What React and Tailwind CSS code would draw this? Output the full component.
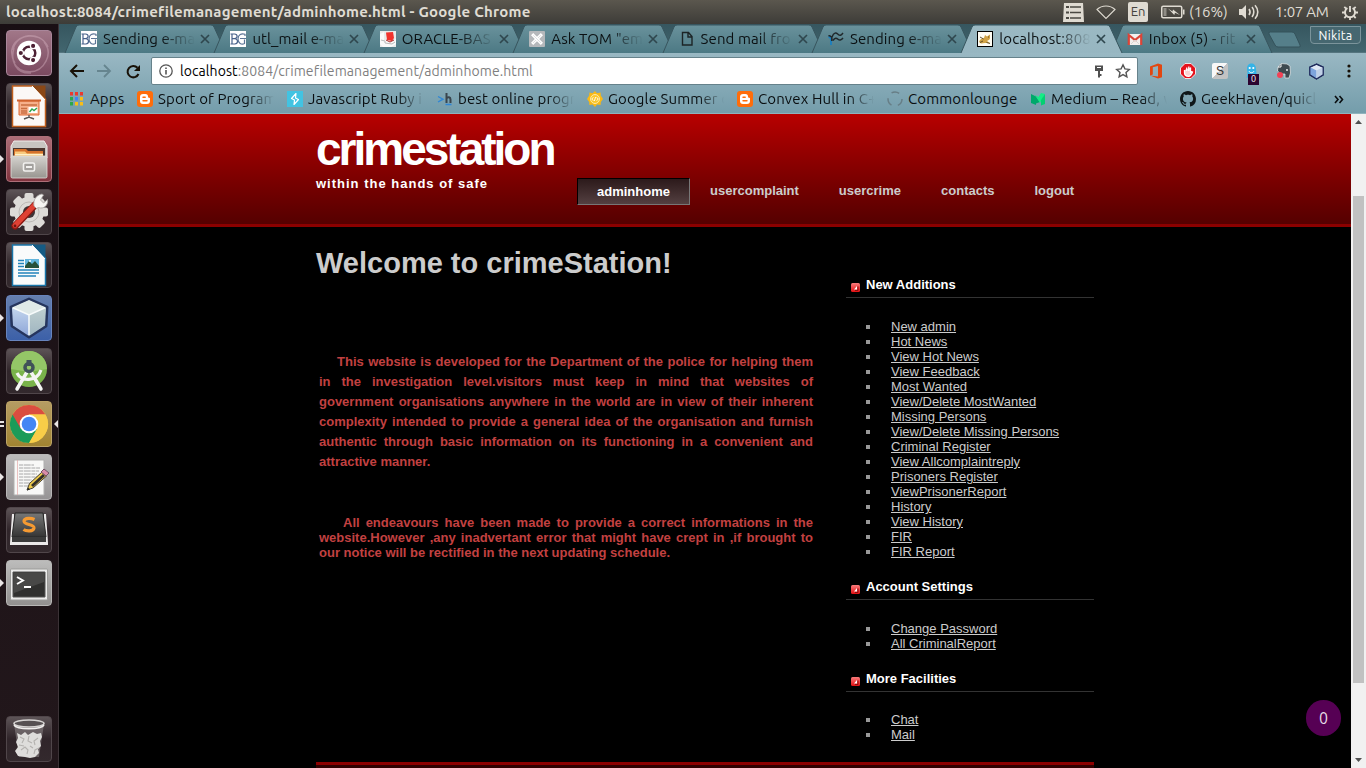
import React from "react";

const UI = "font-['Ubuntu','Noto_Sans',sans-serif]";

/* ---------- small favicons ---------- */
const BC = () => (
  <svg width="16" height="16" viewBox="0 0 16 16" className="shrink-0">
    <rect width="16" height="16" fill="#fff" />
    <path d="M2 3v10M.5 3h4c3.500 0 3.500 4.700 0 4.700H2h2.800c3.700 0 3.500 5.300 0 5.300H.5" fill="none" stroke="#47618a" strokeWidth="1.200" />
    <path d="M15 5V3.300c-3.500-1.500-7 .5-7 4.700s3.500 6.200 6.500 4.500V8.500M10 7.500h6" fill="none" stroke="#5d7697" strokeWidth="1.200" />
  </svg>
);
const Oracle = () => (
  <svg width="16" height="16" viewBox="0 0 16 16" className="shrink-0">
    <path d="M0 0h16v16H0z" fill="#e8eaea" />
    <path d="M0 3l4-2v8l8 1 4-2v5l-5 3H3l-3-3z" fill="#fafafa" />
    <path d="M1 9l4 1v2l7 1 3-2" stroke="#b9bcbd" fill="none" />
    <path d="M6 1.500l7-.5 1 6-2 3-5-1z" fill="#f0332d" />
    <path d="M6 9l4 2 4-2" stroke="#a92c2a" fill="none" />
  </svg>
);
const Tom = () => (
  <svg width="16" height="16" viewBox="0 0 16 16" className="shrink-0">
    <rect width="16" height="16" rx="1" fill="#b5b8bb" />
    <path d="M11.800 3L13 4.200 4.200 13 3 11.800z" fill="#b5b8bb" stroke="#fff" strokeWidth="1.400" />
    <path d="M3 4.200L4.200 3 13 11.800 11.800 13z" fill="#b5b8bb" stroke="#fff" strokeWidth="1.400" />
  </svg>
);
const Page = () => (
  <svg width="16" height="16" viewBox="0 0 16 16" className="shrink-0">
    <path d="M3.500 1.500h6l3.500 4v8.500H3.500zM9 2v4h4" fill="none" stroke="#1c2426" strokeWidth="1.400" />
  </svg>
);
const Waves = () => (
  <svg width="16" height="16" viewBox="0 0 16 16" className="shrink-0">
    <path d="M.5 6c3 0 2.500 3 2.500 8" fill="none" stroke="#1b7fc0" strokeWidth="1.800" />
    <path d="M.5 5c2-1 3 2 3.500 1C6 1 8 1.500 10 3.300s3 1.200 5-1.300M5 9.500C7 6.500 8.500 7 10 8.300s3 1.200 5-1.300M3.800 6v4" fill="none" stroke="#20282b" strokeWidth="1.500" />
  </svg>
);
const Tomcat = () => (
  <svg width="16" height="16" viewBox="0 0 16 16" className="shrink-0">
    <rect x=".5" y=".5" width="15" height="15" fill="#fffdf4" stroke="#000" strokeWidth="1" />
    <path d="M2 11c1-3 3-4 5-4l1-3 2 1.500L13 3.500v3.500c0 2-2 2-3 3l3 2H8l-4 .5z" fill="#d1a346" />
    <path d="M3 6l3.500 2M3 11.500l3-1.500M11 6h1M9.500 11.500l3.500 1" stroke="#55431f" strokeWidth=".9" />
  </svg>
);
const Gmail = () => (
  <svg width="16" height="16" viewBox="0 0 16 16" className="shrink-0">
    <path d="M1 3h14v11H1z" fill="#f3f0ee" />
    <path d="M1.800 14V4L8 9l6.200-5v10" fill="none" stroke="#db4437" strokeWidth="2.200" />
    <path d="M4 13l4-4 4 4" fill="none" stroke="#d8d5d3" />
  </svg>
);
const Blogger = () => (
  <svg width="16" height="16" viewBox="0 0 16 16" className="shrink-0">
    <rect width="16" height="16" rx="3" fill="#ff6d0a" />
    <path d="M6 3h2.500a2.500 2.500 0 0 1 2.500 2.500c0 1 .5 1.200 1.200 1.200.5 0 .8.400.8.800v2.500a3 3 0 0 1-3 3H6a3 3 0 0 1-3-3V6a3 3 0 0 1 3-3z" fill="#fff" />
    <path d="M6 6.200h2.200M6 9.800h4" stroke="#ff6d0a" strokeWidth="1.400" strokeLinecap="round" />
  </svg>
);
const AppsGrid = () => {
  const c = ["#ea3a2f", "#ea3a2f", "#ea3a2f", "#2aa84a", "#3f86f5", "#f8bd17", "#2aa84a", "#f8bd17", "#f8bd17"];
  return (
    <svg width="14" height="14" viewBox="0 0 14 14" className="ml-px shrink-0">
      {c.map((f, i) => <rect key={i} x={(i % 3) * 5} y={Math.floor(i / 3) * 5} width="3" height="3.500" fill={f} />)}
    </svg>
  );
};
const Bolt = () => (
  <svg width="16" height="16" viewBox="0 0 16 16" className="shrink-0">
    <rect width="16" height="16" fill="#42c3e2" />
    <path d="M9 2.500L4.500 7.500l3 1.500L7 13.500l4.500-5-3-1.500z" fill="none" stroke="#fff" strokeWidth="1.200" strokeLinejoin="round" />
  </svg>
);
const Hacker = () => (
  <svg width="16" height="16" viewBox="0 0 16 16" className="shrink-0">
    <path d="M1 5.500l5 2.700-5 2.800M8.500 13.500h6" fill="none" stroke="#2f86d6" strokeWidth="1.400" />
    <path d="M9.500 2v10M9.500 7.500c1.500-2 4-1.500 4 1V12" fill="none" stroke="#39454d" strokeWidth="2" />
  </svg>
);
const Sun = () => (
  <svg width="16" height="16" viewBox="0 0 16 16" className="shrink-0">
    <path d="M8 0l2 2.200 3.600-.8.200 3L16 8l-2.200 3-.2 3-3.600-.5L8 16l-2.400-2.500-3.200.5L2.200 11 0 8l2.200-3.500.2-3.100 3.200.8z" fill="#f9b915" />
    <circle cx="8" cy="8" r="4.500" fill="#fbc72e" stroke="#fff3c8" strokeWidth=".8" />
    <path d="M6.300 6.300L4.800 8l1.500 1.700M9.700 6.300L11.200 8 9.700 9.700M8.600 6l-1.200 4" stroke="#fff" fill="none" strokeWidth=".9" />
  </svg>
);
const Ring = () => (
  <svg width="16" height="16" viewBox="0 0 16 16" className="shrink-0">
    <circle cx="8" cy="8" r="7" fill="none" stroke="#677e86" strokeWidth="1.500" strokeDasharray="8 6.600" />
  </svg>
);
const MediumIcon = () => (
  <svg width="16" height="16" viewBox="0 0 16 16" className="shrink-0">
    <path d="M1 3l5 2.500v8.500L1 12z" fill="#00a86b" />
    <path d="M6 5.500L10 11l-4 1.500z" fill="#00a86b" />
    <path d="M5 4l5 8 5-9-4-1-2.500 4z" fill="#15ed86" />
    <path d="M15 3v10l-4 1.500V9z" fill="#04d072" />
  </svg>
);
const Github = () => (
  <svg width="16" height="16" viewBox="0 0 16 16" className="shrink-0">
    <path fill="#101719" d="M8 0C3.580 0 0 3.580 0 8c0 3.540 2.290 6.530 5.470 7.590.4.070.55-.17.55-.38 0-.19-.01-.82-.01-1.490-2.010.37-2.530-.49-2.690-.94-.09-.23-.48-.94-.82-1.130-.28-.15-.68-.52-.01-.53.63-.01 1.080.58 1.230.82.72 1.210 1.870.87 2.330.66.070-.52.28-.87.51-1.070-1.780-.2-3.640-.89-3.640-3.950 0-.87.31-1.590.82-2.150-.08-.2-.36-1.020.08-2.120 0 0 .67-.21 2.200.82.64-.18 1.320-.27 2-.27s1.360.09 2 .27c1.530-1.040 2.200-.82 2.200-.82.44 1.100.16 1.920.08 2.120.51.56.82 1.270.82 2.150 0 3.070-1.870 3.750-3.650 3.950.29.25.54.73.54 1.480 0 1.070-.01 1.930-.01 2.200 0 .21.15.46.55.38A8.010 8.010 0 0 0 16 8c0-4.420-3.580-8-8-8z" />
  </svg>
);

/* ---------- launcher icons (46 x 46 tiles) ---------- */
const UbuntuIcon = () => (
  <svg width="46" height="46" viewBox="0 0 46 46">
    <path d="M7 20C10 3 34 0 42 17M9 33C-1 17 13 2 31 7M25 43C10 44 4 31 8 18M40 31C33 46 14 44 8 33M38 12C48 24 38 42 23 42" fill="none" stroke="#d9b4c4" strokeOpacity=".42" strokeWidth="1.500" />
    <circle cx="23" cy="23" r="12.200" fill="#fff" />
    <circle cx="23" cy="23" r="6.300" fill="none" stroke="#4d2134" strokeWidth="2.500" />
    <g stroke="#fff" strokeWidth="1.300" fill="#4d2134">
      <circle cx="14.800" cy="23" r="2.700" /><circle cx="27.100" cy="15.900" r="2.700" /><circle cx="27.100" cy="30.100" r="2.700" />
    </g>
  </svg>
);
const Impress = () => (
  <svg width="46" height="46" viewBox="0 0 46 46">
    <path d="M6.500 3h21L39.500 16v27.500h-33z" fill="#fbf8f6" stroke="#c1601e" strokeWidth="1.500" />
    <path d="M26 2.500h13.500V16z" fill="#8a4716" /><path d="M26 3l13 14" stroke="#fff" />
    <path d="M13 18h20v14H13z" fill="#f6b08b" stroke="#dd6a35" /><path d="M11 17.500h24" stroke="#cf622f" strokeWidth="2" />
    <path d="M15 22h16M15 25.500h6M15 28h6M15 30h6" stroke="#c96d42" strokeWidth="1.300" />
    <rect x="22.500" y="24" width="9" height="6" fill="#fff" /><path d="M23.500 29l2.500-3 2 1.500 3-2.500" stroke="#2da54d" strokeWidth="1.400" fill="none" />
    <path d="M23 32v3M18 36l5-2 5 2" stroke="#565352" strokeWidth="1.400" fill="none" />
  </svg>
);
const Files = () => (
  <svg width="46" height="46" viewBox="0 0 46 46">
    <defs><linearGradient id="fl" x2="0" y2="1"><stop stopColor="#d5d3cf" /><stop offset="1" stopColor="#989590" /></linearGradient></defs>
    <path d="M8 5h30l3 5v12H5V10z" fill="#c8c5c1" stroke="#efedeb" /><path d="M7 12h32v10H7z" fill="#4a3630" />
    <path d="M8 13h12l2 2h15v7H8z" fill="#d5722c" /><path d="M9 15.500h10l2 2h16v4H9z" fill="#f9cb7f" />
    <path d="M9 18.500h28" stroke="#fff0c7" />
    <rect x="5" y="20" width="36" height="22" rx="1.500" fill="url(#fl)" stroke="#e1dfdc" strokeWidth=".8" />
    <rect x="17.500" y="27" width="11" height="8" rx="1.500" fill="#a3a19e" stroke="#f2f1ef" strokeWidth="1.600" /><path d="M20 31h6" stroke="#f2f1ef" strokeWidth="2" />
  </svg>
);
const Settings = () => (
  <svg width="46" height="46" viewBox="0 0 46 46">
    <g fill="#dddbd8">
      {[0, 45, 90, 135].map((a) => <rect key={a} x="18.500" y="4" width="9" height="38" rx="2" transform={`rotate(${a} 23 23)`} />)}
      <circle cx="23" cy="23" r="15" />
    </g>
    <circle cx="23" cy="23" r="10" fill="none" stroke="#bdbab7" /><circle cx="23" cy="23" r="6" fill="#3d3437" />
    <path d="M9 37L29 16" stroke="#891711" strokeWidth="7" strokeLinecap="round" /><path d="M9 36.500L29 15.500" stroke="#df4134" strokeWidth="5" strokeLinecap="round" />
    <path d="M28 17c-1-6 2-11 8-12l1.500 1-3 5 3 3 4-3.500c1 6-4 10-9 8l-2 1z" fill="#f5f4f2" stroke="#a5a19e" strokeWidth=".8" /><circle cx="9" cy="37" r="1.400" fill="#6f1611" />
  </svg>
);
const Writer = () => (
  <svg width="46" height="46" viewBox="0 0 46 46">
    <path d="M6.500 3h21L39.500 16v27.500h-33z" fill="#fafbfb" stroke="#1976aa" strokeWidth="1.500" />
    <path d="M26 2.500h13.500V16z" fill="#155b84" /><path d="M26 3l13 14" stroke="#fff" />
    <path d="M12 18.500h6M12 21.500h6M12 24.500h6M12 28h21M12 31h21M12 34h18" stroke="#2384bc" strokeWidth="1.500" />
    <rect x="19" y="17" width="14" height="9" fill="#65b7de" /><path d="M19 24l4-5 3 3 3-3 4 5v2H19z" fill="#285139" /><circle cx="24" cy="19" r="1" fill="#fff" />
  </svg>
);
const Cube = () => (
  <svg width="46" height="46" viewBox="0 0 46 46">
    <defs>
      <linearGradient id="cl" x2="0" y2="1"><stop stopColor="#c3d6ee" /><stop offset="1" stopColor="#8ea6d8" /></linearGradient>
      <linearGradient id="cr" x2="0" y2="1"><stop stopColor="#bfcfd0" /><stop offset="1" stopColor="#9fb5c0" /></linearGradient>
    </defs>
    <path d="M23 4l18 8-1 19L23 42 6 31 5 12z" fill="#d8e6e9" stroke="#26355e" strokeWidth="3" strokeLinejoin="round" />
    <path d="M23 5l17 7.500L23 20 6 12.500z" fill="#dfe9e8" /><path d="M6 12.500L23 20v21L7 30.500z" fill="url(#cl)" /><path d="M40 12.500L23 20v21l16-10.500z" fill="url(#cr)" />
    <path d="M7 12.700L23 20l16-7.300M23 20v20" fill="none" stroke="#f7fbfb" strokeWidth="1.500" />
  </svg>
);
const Studio = () => (
  <svg width="46" height="46" viewBox="0 0 46 46">
    <circle cx="23" cy="21" r="18" fill="#79b34a" /><path d="M5 21a18 18 0 0 1 36 0l-18 3z" fill="#94c667" />
    <path d="M21 24l-10 17M25 24l10 17" stroke="#f4f5f3" strokeWidth="3.500" strokeLinecap="round" />
    <path d="M11 25c4 9 20 9 24-3" fill="none" stroke="#f4f5f3" strokeWidth="3.200" />
    <rect x="20.500" y="12" width="5" height="6" fill="#405159" /><circle cx="23" cy="19.500" r="4" fill="none" stroke="#405159" strokeWidth="3.500" />
  </svg>
);
const Chrome = () => (
  <svg width="46" height="46" viewBox="0 0 46 46">
    <circle cx="23" cy="23" r="19" fill="#f8cd48" />
    <path d="M23 23L6.540 13.500A19 19 0 0 1 39.460 13.500H23z" fill="#da4d40" />
    <path d="M6.540 13.500A19 19 0 0 0 23 42L31.200 27.800 23 23z" fill="#1b9b59" />
    <path d="M6.540 13.500L14.800 27.700 23 18V13.500z" fill="#da4d40" /><path d="M14.800 27.750L23 23l8.200 4.700L23 42z" fill="#1b9b59" /><path d="M23 13.500h16.460A19 19 0 0 1 23 42l8.200-14.200z" fill="#f8cd48" />
    <circle cx="23" cy="23" r="9.300" fill="#fff" /><circle cx="23" cy="23" r="7.300" fill="#4486f4" />
  </svg>
);
const Editor = () => (
  <svg width="46" height="46" viewBox="0 0 46 46">
    <path d="M8 6h30v35H8z" fill="#f8f8f7" stroke="#b0b0af" /><path d="M11.500 6v35" stroke="#e3a9a8" strokeWidth=".7" />
    <path d="M13 11h15M13 14h21M13 17h20M13 20h18M13 23h19M13 26h13M13 29h12M13 32h10" stroke="#9e9e9e" strokeWidth=".9" strokeDasharray="4 .7 7 .7" />
    <path d="M21 36l2.500-6.500L36 18l4.500 4L27 34z" fill="#edca4c" stroke="#494234" /><path d="M25 31l12-11 2 2-12 11z" fill="#312e2b" /><path d="M35 18l3-3 5 4-3 3z" fill="#d98ca8" stroke="#725366" /><path d="M21 36.500l1-3 2 2z" fill="#222" />
  </svg>
);
const Sublime = () => (
  <svg width="46" height="46" viewBox="0 0 46 46">
    <defs><linearGradient id="sb" x2="0" y2="1"><stop stopColor="#777" /><stop offset="1" stopColor="#343434" /></linearGradient></defs>
    <path d="M6 7h2v26h30V7h2l2 29v2H4v-2z" fill="#eceaea" /><path d="M9 6h28l3 24H6z" fill="url(#sb)" stroke="#262626" /><path d="M6 30h34v5H6z" fill="#3c3c3c" />
    <path d="M28.500 12.500c-3-1.500-10-2-10.500 1.500-.5 4 10.500 3 10 7-.6 4-8 3.300-10.500 1.500" fill="none" stroke="#f59a32" strokeWidth="3.200" />
  </svg>
);
const Terminal = () => (
  <svg width="46" height="46" viewBox="0 0 46 46">
    <rect x="4.500" y="9" width="37" height="31" rx="1" fill="#ececeb" stroke="#9c9c9a" /><path d="M7 12h32v25H7z" fill="#30302f" stroke="#555" />
    <path d="M8 13h30v9L8 33z" fill="#484847" /><path d="M11 17l6 3.500-6 3.500M18 27h7" stroke="#fff" strokeWidth="1.900" fill="none" />
  </svg>
);
const Trash = () => (
  <svg width="46" height="46" viewBox="0 0 46 46">
    <path d="M8 8h30l-5 33H13z" fill="#878082" fillOpacity=".6" />
    <path d="M11 17l4 2 4-3 3 3 5-3 4 2 4-1 1 4-2 4 1 5-3 3 1 4-4 4-5 1-5-1-7-1-3-5 3-4-2-5 2-4z" fill="#dedddb" />
    <path d="M14 21l4 2-2 4M23 20l-1 5 4 2M32 22l-4 3 1 4M15 34l4-3 3 3-1 4M28 38l1-4 4-2M13 29l5 1M24 30l3 2" stroke="#b4b2af" strokeWidth="1.100" fill="none" />
    <ellipse cx="23" cy="7.500" rx="15" ry="3.500" fill="#565052" stroke="#d7d4d3" strokeWidth="1.600" /><path d="M8 9c3 5 27 5 30 0" fill="none" stroke="#f1efee" strokeWidth="1.500" />
  </svg>
);

const DARK = "bg-linear-to-b from-[#5d5457] via-[#30252a] to-[#33292d] border-[#50464a]";
const LAUNCHER = [
  { icon: UbuntuIcon, cls: "bg-linear-to-b from-[#a17788] to-[#7b4a60] border-[#a9869a]" },
  { icon: Impress, cls: DARK },
  { icon: Files, cls: "bg-linear-to-b from-[#ac6d77] to-[#81333e] border-[#ad6f78]", left: 1 },
  { icon: Settings, cls: DARK },
  { icon: Writer, cls: DARK },
  { icon: Cube, cls: "bg-linear-to-b from-[#667fae] to-[#3c60a8] border-[#6884bd]", left: 1 },
  { icon: Studio, cls: DARK },
  { icon: Chrome, cls: "bg-linear-to-b from-[#b59c63] to-[#a28431] border-[#bda467]", left: 2, right: true },
  { icon: Editor, cls: "bg-linear-to-b from-[#bcbabb] to-[#969495] border-[#b8b6b7]", left: 1 },
  { icon: Sublime, cls: DARK },
  { icon: Terminal, cls: "bg-linear-to-b from-[#bcbcbb] to-[#92908f] border-[#b8b7b6]", left: 1 },
];

function Tile({ icon: Icon, cls, left, right }) {
  return (
    <div className="relative flex h-[46px] w-[59px] shrink-0 pl-[6px]">
      {left === 1 && <svg width="4" height="8" className="absolute left-0 top-[19px]"><path d="M0 0l4 4-4 4z" fill="#e9e4e5" /></svg>}
      {left === 2 && <svg width="4" height="8" className="absolute left-0 top-[19px]"><path d="M0 1h4v2H0zM0 5h4v2H0z" fill="#e9e4e5" /></svg>}
      {right && <svg width="4" height="8" className="absolute right-px top-[19px]"><path d="M4 0L0 4l4 4z" fill="#e9e4e5" /></svg>}
      <div className={`relative h-[46px] w-[46px] overflow-hidden rounded-[4px] border ${cls}`}>
        <div className="-m-px"><Icon /></div>
      </div>
    </div>
  );
}

/* ---------- top panel ---------- */
function Panel() {
  return (
    <header className={`flex h-6 shrink-0 items-center bg-linear-to-b from-[#5b574e] to-[#3d3c38] pl-[6px] pr-2 text-[#dfdbd2] ${UI}`}>
      <h1 className="whitespace-nowrap text-[15px] font-bold leading-6 tracking-[0.240px]">localhost:8084/crimefilemanagement/adminhome.html - Google Chrome</h1>
      <div className="ml-auto flex items-center">
        <svg width="21" height="19" viewBox="0 0 21 19" className="mr-[12px]">
          <path d="M1 0h19l1 19H0z" fill="#dfdbd2" />
          <path d="M3 4h3M3 9.500h3M3 15h3" stroke="#4a4842" strokeWidth="2" /><path d="M7 4h11M7 9.500h11M7 15h11" stroke="#4a4842" strokeWidth="1.300" />
        </svg>
        <svg width="20" height="16" viewBox="0 0 20 16" className="mr-[12px]"><path d="M1 5.500C6 .8 14 .8 19 5.500L10 14.500z" fill="none" stroke="#dfdbd2" strokeWidth="1.100" /></svg>
        <span className="mr-[13px] flex h-5 w-5 items-center justify-center rounded-[2px] bg-[#dfdbd2] text-[13px] text-[#45433e]">En</span>
        <svg width="24" height="14" viewBox="0 0 24 14" className="mr-[4px]">
          <rect x=".75" y="1.250" width="20" height="11.500" rx="1.500" fill="none" stroke="#dfdbd2" strokeWidth="1.500" />
          <path d="M22 4.500h1.500v5H22z" fill="#dfdbd2" /><path d="M2.500 3h3v8h-3z" fill="#8f8c85" />
          <path d="M7 3.500l4.500 3 .5-2 7 5.500-5-2.200-.7 2.200z" fill="#dfdbd2" />
        </svg>
        <span className="w-[38px] whitespace-nowrap text-[15px] leading-6 tracking-[-0.050px]">(16%)</span>
        <svg width="21" height="16" viewBox="0 0 21 16" className="ml-[12px] mr-[15px]">
          <path d="M0 5h3l4-4v14l-4-4H0z" fill="#dfdbd2" />
          <path d="M10 5c1.200 1.700 1.200 4.300 0 6M13 3c2.400 2.800 2.400 7.200 0 10M16 1.200c3.700 4 3.700 9.600 0 13.600" fill="none" stroke="#dfdbd2" strokeWidth="1.600" />
        </svg>
        <span className="w-[55px] whitespace-nowrap text-[15px] leading-6 tracking-[-0.250px]">1:07 AM</span>
        <svg width="16" height="16" viewBox="0 0 16 16" className="ml-[12px]">
          <path d="M5.400 4a5 5 0 1 0 5.200 0M8 2v6" fill="none" stroke="#dfdbd2" strokeWidth="1.900" />
          <path d="M0 8.500h3M13 8.500h3M8 13.500V16M2.300 14l1.900-1.900M13.700 14l-1.900-1.900M2.300 2.800l1.900 1.900M13.700 2.800l-1.900 1.900" stroke="#dfdbd2" strokeWidth="1.800" />
        </svg>
      </div>
    </header>
  );
}

/* ---------- browser tabs ---------- */
const TABS = [
  [BC, "Sending e-ma"],
  [BC, "utl_mail e-ma"],
  [Oracle, "ORACLE-BAS"],
  [Tom, "Ask TOM \"em"],
  [Page, "Send mail fro"],
  [Waves, "Sending e-ma"],
  [Tomcat, "localhost:808"],
  [Gmail, "Inbox (5) - rit"],
];
const ACTIVE = 6;

function Tab({ Icon, title, active }) {
  return (
    <div className={`relative flex h-[29px] w-[149.400px] shrink-0 items-center ${active ? "z-10" : ""}`}>
      <svg width="164" height="29" viewBox="0 0 164 29" className="absolute left-0 top-0">
        <path d="M1 29L12 3q1-2 3-2H147q2 0 3 2L162 29" fill={active ? "url(#tabOn)" : "url(#tabOff)"} stroke="#38555e" strokeWidth="1" />
      </svg>
      <div className="relative flex h-full w-full items-center pl-[17px]">
        <Icon />
        <span className="ml-[6px] w-[92px] overflow-hidden whitespace-nowrap text-[15px] leading-5 tracking-[0.100px] text-[#0b1012] [mask-image:linear-gradient(to_right,#000_62%,transparent)]">{title}</span>
        <svg width="10" height="10" viewBox="0 0 10 10" className="ml-[5px] shrink-0"><path d="M1 1l8 8M9 1L1 9" stroke="#2f474e" strokeWidth="1.700" /></svg>
      </div>
    </div>
  );
}

function TabStrip() {
  return (
    <div className="flex h-7 shrink-0 bg-linear-to-b from-[#36565f] to-[#42666f] pl-[5px]">
      <svg width="0" height="0" className="absolute">
        <defs>
          <linearGradient id="tabOff" x2="0" y2="1"><stop stopColor="#6a929c" /><stop offset="1" stopColor="#4c7984" /></linearGradient>
          <linearGradient id="tabOn" x2="0" y2="1"><stop stopColor="#9bb9c3" /><stop offset="1" stopColor="#97b6c1" /></linearGradient>
        </defs>
      </svg>
      {TABS.map(([Icon, title], i) => <Tab key={i} Icon={Icon} title={title} active={i === ACTIVE} />)}
      <svg width="38" height="18" viewBox="0 0 38 18" className="ml-[8px] mt-[7px] shrink-0">
        <path d="M3.500 1H25q2 0 3 2l5 11q1 2-1 2H11q-2 0-3-2L2 3Q1 1 3.500 1z" fill="#557f8a" stroke="#34525b" />
      </svg>
      <div className="ml-auto mr-[5px] mt-[2px] flex h-[18px] w-[51px] shrink-0 items-center justify-center rounded-b-[4px] border border-[#7b949b] bg-[#466770] text-[12.500px] tracking-[0.200px] text-white">Nikita</div>
    </div>
  );
}

/* ---------- toolbar ---------- */
function Toolbar() {
  return (
    <div className="flex h-[37px] shrink-0 items-center border-t border-[#55757f] pl-[10px]">
      <svg width="15" height="14" viewBox="0 0 15 14" className="mr-[13px]"><path d="M15 7H2M8 1L2 7l6 6" stroke="#171107" strokeWidth="2" fill="none" /></svg>
      <svg width="15" height="14" viewBox="0 0 15 14" className="mr-[14px]"><path d="M0 7h13M7 1l6 6-6 6" stroke="#66858f" strokeWidth="1.800" fill="none" /></svg>
      <svg width="15" height="15" viewBox="0 0 15 15" className="mr-[10px]"><path d="M12.500 10A5.700 5.700 0 1 1 11.500 3.800" stroke="#171107" strokeWidth="2" fill="none" /><path d="M14 1v6H8z" fill="#171107" /></svg>
      <div className="flex h-[28px] w-[987px] shrink-0 items-center rounded-[2px] border border-[#66828b] bg-white pl-[7px] pr-[6px]">
        <svg width="14" height="14" viewBox="0 0 14 14" className="mr-[7px]"><circle cx="7" cy="7" r="6.200" fill="none" stroke="#555" strokeWidth="1.300" /><path d="M7 6v4.500M7 3.500v1.500" stroke="#555" strokeWidth="1.600" /></svg>
        <span className="whitespace-nowrap text-[14px] leading-6 tracking-[0.080px] text-[#7f7f7f]"><span className="text-black">localhost</span>:8084/crimefilemanagement/adminhome.html</span>
        <svg width="8" height="13" viewBox="0 0 8 13" className="ml-auto mr-[12px]"><path d="M0 .5h8v5.500H5v6.500H3V6H0z" fill="#505050" /><path d="M2 2.500h4" stroke="#fff" /><path d="M5 9h1.500v2H5z" fill="#505050" /></svg>
        <svg width="16" height="16" viewBox="0 0 16 16"><path d="M8 1.800l1.900 4.100 4.400.5-3.300 3 .9 4.400L8 11.600l-3.900 2.200.9-4.400-3.300-3 4.400-.5z" fill="none" stroke="#555" strokeWidth="1.400" /></svg>
      </div>
      <div className="flex flex-1 items-center">
        <svg width="16" height="16" viewBox="0 0 16 16" className="ml-[10px]"><path d="M2 3.500L10 .5l4 1.200v12.600L10 15.500l-8-3 8 1V3L4.800 4.300v7.200L2 12.500z" fill="#e2460f" /></svg>
        <svg width="16" height="16" viewBox="0 0 16 16" className="ml-[16px]"><path d="M5 .5h6L15.500 5v6L11 15.500H5L.5 11V5z" fill="#e5111c" stroke="#fff" strokeWidth=".8" /><path d="M4.500 7v2.500c0 2.500 1.500 3.800 4 3.800 2 0 3-1.600 4-4.300-1-.8-1.600 0-2 1V4.500M8.800 8V3.500M6.700 8V4.500" stroke="#fff" strokeWidth="1.300" fill="#fff" fillOpacity=".8" /></svg>
        <span className="ml-[16px] flex h-4 w-4 items-center justify-center rounded-[2px] bg-linear-to-br from-[#f8f8f8] from-50% to-[#c3c3c3] to-50% font-['Liberation_Sans',Arial,sans-serif] text-[12px] leading-4 text-[#333]">S</span>
        <div className="relative ml-[16px] h-4 w-4">
          <svg width="16" height="16" viewBox="0 0 16 16"><path d="M2.500 15l1-5-.5-4C3 2 5 .5 7.500.5S12 2.500 12 6l1 9-3-1.500-2 2-2-2z" fill="#35b3e6" /><circle cx="5.700" cy="5" r="1.100" fill="#fff" /><circle cx="9.300" cy="5" r="1.100" fill="#fff" /><path d="M5 8.200c1 2 4 2 5 0" stroke="#fff" fill="none" /></svg>
          <span className="absolute left-[4px] top-[11px] flex h-[11px] w-[11px] items-center justify-center bg-[#2c0430] text-[9px] leading-[11px] text-white">0</span>
        </div>
        <svg width="16" height="16" viewBox="0 0 16 16" className="ml-[16px]"><path d="M2 4l3-3.500 6 .5 3 2 .5 7-1.500 5h-4v-4L5 11 1.500 8z" fill="#3f4a50" stroke="#e6ebec" strokeWidth=".7" /><path d="M5 1v3H2" stroke="#fff" fill="none" /><circle cx="11" cy="7" r=".9" fill="#fff" /><circle cx="4" cy="12" r="3" fill="#f34255" /></svg>
        <svg width="17" height="17" viewBox="0 0 46 46" className="ml-[16px]"><path d="M23 3l18 8v21L23 43 5 32V11z" fill="#dfe8f4" stroke="#1f2b5c" strokeWidth="3.500" /><path d="M5 11l18 9v23L5 32z" fill="#7ea4dc" /><path d="M41 11l-18 9v23l18-11z" fill="#c0d0e6" /><path d="M23 3l18 8v21L23 43 5 32V11z" fill="none" stroke="#1f2b5c" strokeWidth="3" /></svg>
        <svg width="4" height="14" viewBox="0 0 4 14" className="ml-[22px]"><g fill="#171107"><circle cx="2" cy="2" r="1.600" /><circle cx="2" cy="7" r="1.600" /><circle cx="2" cy="12" r="1.600" /></g></svg>
      </div>
    </div>
  );
}

/* ---------- bookmarks ---------- */
const MARKS = [
  [Blogger, "Sport of Program"],
  [Bolt, "Javascript Ruby i"],
  [Hacker, "best online progr"],
  [Sun, "Google Summer o"],
  [Blogger, "Convex Hull in C+"],
  [Ring, "Commonlounge"],
  [MediumIcon, "Medium – Read, w"],
  [Github, "GeekHaven/quicl"],
];

function Bookmarks() {
  return (
    <div className="flex h-5 items-center whitespace-nowrap pl-[10px] text-[15px] leading-5 tracking-[0.120px] text-[#0a0e10]">
      <AppsGrid />
      <span className="ml-[6px] w-[47px] shrink-0">Apps</span>
      {MARKS.map(([Icon, label], i) => (
        <div key={i} className={`flex shrink-0 items-center ${i === 5 ? "w-[143px]" : "w-[150px]"}`}>
          <Icon />
          <span className={`ml-[5px] overflow-hidden ${i === 5 ? "w-[114px]" : "w-[116px] [mask-image:linear-gradient(to_right,#000_78%,transparent)]"}`}>{label}</span>
        </div>
      ))}
      <svg width="10" height="9" viewBox="0 0 10 9" className="ml-[4px]"><path d="M1 1l3 3.500L1 8M5.500 1l3 3.500-3 3.500" fill="none" stroke="#0a0e10" strokeWidth="1.600" /></svg>
    </div>
  );
}

/* ---------- website ---------- */
const SECTIONS = [
  ["New Additions", ["New admin", "Hot News", "View Hot News", "View Feedback", "Most Wanted", "View/Delete MostWanted", "Missing Persons", "View/Delete Missing Persons", "Criminal Register", "View Allcomplaintreply", "Prisoners Register", "ViewPrisonerReport", "History", "View History", "FIR", "FIR Report"], "pt-[21px]"],
  ["Account Settings", ["Change Password", "All CriminalReport"], "pt-[21px]"],
  ["More Facilities", ["Chat", "Mail"], "pt-[20px]"],
];

function Section({ title, items, pad }) {
  return (
    <section className="mb-[15px]">
      <h3 className="flex h-[26px] items-start border-b border-[#333] pl-[5px] text-[13px] font-bold leading-[15px] text-white">
        <svg width="9" height="9" viewBox="0 0 9 9" className="mr-[6px] mt-[11px]">
          <defs><linearGradient id="bul" x2="0" y2="1"><stop stopColor="#f97c7c" /><stop offset="1" stopColor="#e30f12" /></linearGradient></defs>
          <rect width="9" height="9" rx="1.500" fill="url(#bul)" /><path d="M6 3v3.500H3z" fill="#fff" /><path d="M7 3.500v4H4" stroke="#8b0d0d" fill="none" />
        </svg>
        <span className="pt-[5px]">{title}</span>
      </h3>
      <ul className={pad}>
        {items.map((t) => (
          <li key={t} className="flex h-[15px] items-center pl-5 text-[13px] leading-[15px] text-[#ccc]">
            <span className="mr-[21px] h-1 w-1 bg-[#999]" />
            <a href="#" className="underline">{t}</a>
          </li>
        ))}
      </ul>
    </section>
  );
}

function Website() {
  return (
    <main className="flex min-w-0 flex-1 flex-col overflow-hidden bg-black font-['Liberation_Sans',Arial,sans-serif]">
      <div className="h-[113px] shrink-0 border-b-[3px] border-[#8b0000] bg-linear-to-b from-[#b80000] to-[#550000] pl-[257px]">
        <div className="flex h-full w-[778px]">
          <div className="w-[261px] shrink-0">
            <h2 className="pt-[9px] text-[46px] font-bold leading-[52px] tracking-[-3px] text-white">crimestation</h2>
            <p className="whitespace-nowrap pt-px text-[13px] font-bold leading-[15px] tracking-[1px] text-white">within the hands of safe</p>
          </div>
          <nav className="flex items-start pt-[64px] text-[13px] font-bold leading-[15px] text-[#ccc]">
            <a className="h-[27px] w-[113px] border border-b-[#777] border-l-black border-r-[#777] border-t-black bg-linear-to-b from-[#2c1a1b] to-[#544041] pt-[5px] text-center text-white">adminhome</a>
            {["usercomplaint", "usercrime", "contacts", "logout"].map((t) => <a key={t} className="px-5 pt-[5px]">{t}</a>)}
          </nav>
        </div>
      </div>
      <div className="flex h-[535px] shrink-0 pl-[257px]">
        <article className="w-[530px] shrink-0">
          <h2 className="pt-[19px] text-[29px] font-bold leading-[34px] text-[#ccc]">Welcome to crimeStation!</h2>
          <div className="w-[497px] pl-[3px] text-[13px] font-bold text-[#c24141]">
            <p className="pt-[72px] text-justify indent-[18px] leading-5">This website is developed for the Department of the police for helping them in the investigation level.visitors must keep in mind that websites of government organisations anywhere in the world are in view of their inherent complexity intended to provide a general idea of the organisation and furnish authentic through basic information on its functioning in a convenient and attractive manner.</p>
            <p className="pt-[43px] text-justify indent-[24px] leading-[15px]">All endeavours have been made to provide a correct informations in the website.However ,any inadvertant error that might have crept in ,if brought to our notice will be rectified in the next updating schedule.</p>
          </div>
        </article>
        <aside className="w-[248px] shrink-0 pt-[45px]">
          {SECTIONS.map(([title, items, pad]) => <Section key={title} title={title} items={items} pad={pad} />)}
        </aside>
      </div>
      <div className="ml-[257px] h-[6px] w-[778px] shrink-0 border-t-[3px] border-[#8b0000] bg-[#300000]" />
    </main>
  );
}

function Scrollbar() {
  return (
    <div className="flex w-[15px] shrink-0 flex-col items-center bg-[#f1f1f1]">
      <svg width="7" height="4" viewBox="0 0 7 4" className="mt-[6px]"><path d="M0 4l3.500-4L7 4z" fill="#505050" /></svg>
      <div className="mt-[72px] h-[487px] w-[11px] bg-[#c1c1c1]" />
      <svg width="7" height="4" viewBox="0 0 7 4" className="mb-[6px] mt-auto"><path d="M0 0l3.500 4L7 0z" fill="#505050" /></svg>
    </div>
  );
}

export default function App() {
  return (
    <div className="relative flex h-[768px] w-[1366px] flex-col overflow-hidden bg-black">
      <Panel />
      <div className="flex min-h-0 flex-1">
        <aside className="flex w-[59px] shrink-0 flex-col gap-[7px] border-r border-[#3b3236] bg-linear-to-b from-[#190f14] to-[#22171b] pb-[6px] pt-[6px]">
          {LAUNCHER.map((t, i) => <Tile key={i} {...t} />)}
          <div className="mt-auto"><Tile icon={Trash} cls={DARK} /></div>
        </aside>
        <div className="flex min-w-0 flex-1 flex-col">
          <div className={`flex h-[90px] shrink-0 flex-col border-b border-[#8fb3bd] bg-linear-to-b from-[#9bb9c4] from-30% to-[#749dab] ${UI}`}>
            <TabStrip />
            <Toolbar />
            <Bookmarks />
          </div>
          <div className="flex min-h-0 flex-1">
            <Website />
            <Scrollbar />
          </div>
        </div>
      </div>
      <div className={`absolute left-[1306px] top-[700px] flex h-9 w-[35px] items-center justify-center rounded-full bg-[#560054] text-[16px] text-[#e6dce6] ${UI}`}>0</div>
    </div>
  );
}
